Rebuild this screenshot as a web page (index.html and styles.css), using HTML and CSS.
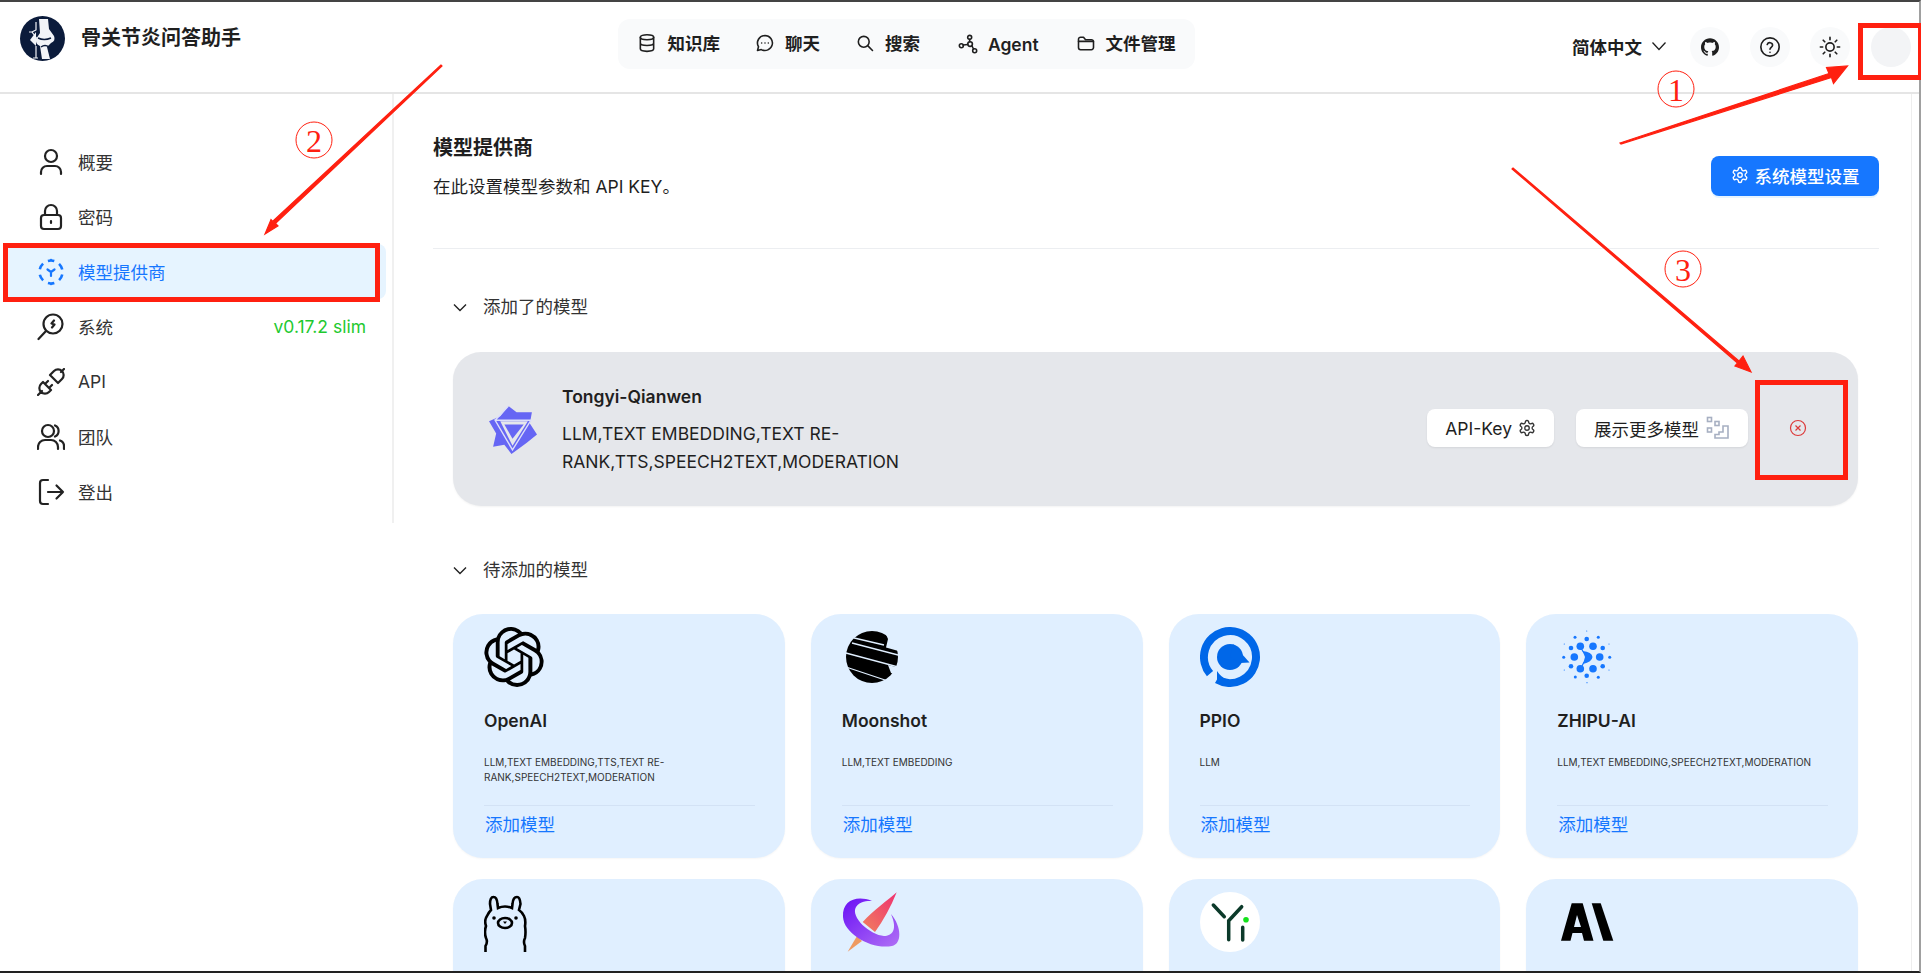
FILE: index.html
```html
<!DOCTYPE html>
<html lang="zh-CN">
<head>
<meta charset="utf-8">
<title>骨关节炎问答助手</title>
<link rel="stylesheet" href="styles.css">
</head>
<body>
<div class="window">
  <header class="topbar">
    <div class="brand">
      <svg class="brand-logo" viewBox="0 0 45 45">
        <circle cx="22.5" cy="22.5" r="22.5" fill="#0b1b3b"/>
        <path d="M19 3 L28 3 L29 13 L34 20 Q36 25 31 27 L27 31 L30 43 L22 43 L20 30 Q15 28 16 23 L20 17Z" fill="#f2f4f8"/>
        <path d="M18 22 Q24 25 31 22 M21 31 Q25 28 29 31" stroke="#0b1b3b" stroke-width="1.5" fill="none"/>
        <path d="M16 6 V14 L12 16 L18 24 M9 16 L12 16 M16 30 V42 M13 42 H18" stroke="#f2f4f8" stroke-width="1.2" fill="none"/>
        <path d="M16 16 L16 30 L10 24Z" fill="#f2f4f8"/>
      </svg>
      <span class="brand-name">骨关节炎问答助手</span>
    </div>
    <nav class="mainnav">
      <a class="navlink"><svg class="navicon" viewBox="0 0 24 24"><ellipse cx="12" cy="5" rx="8" ry="3"/><path d="M4 5v14c0 1.700 3.600 3 8 3s8-1.300 8-3V5M4 12c0 1.700 3.600 3 8 3s8-1.300 8-3"/></svg>知识库</a>
      <a class="navlink"><svg class="navicon" viewBox="0 0 24 24"><path d="M12 3a9 9 0 0 0-7.800 13.500L3 21l4.600-1.100A9 9 0 1 0 12 3z"/><path d="M8 12h.01M12 12h.01M16 12h.01"/></svg>聊天</a>
      <a class="navlink"><svg class="navicon" viewBox="0 0 24 24"><circle cx="10.500" cy="10.500" r="6.500"/><path d="M15.500 15.500 21 21"/></svg>搜索</a>
      <a class="navlink navlink-agent"><svg class="navicon" viewBox="0 0 24 24"><circle cx="14" cy="4" r="2.400"/><circle cx="4" cy="14" r="2.400"/><circle cx="14.500" cy="12" r="2.800"/><circle cx="20" cy="20" r="2.400"/><path d="M14 6.400v2.800M6.200 13.300l5.600-.8M16.600 14l2 4"/></svg>Agent</a>
      <a class="navlink"><svg class="navicon" viewBox="0 0 24 24"><path d="M3 7.500A2.500 2.500 0 0 1 5.500 5H9l2.500 3H18.500A2.500 2.500 0 0 1 21 10.500v7A2.500 2.500 0 0 1 18.500 20h-13A2.500 2.500 0 0 1 3 17.500z"/><path d="M3 10h18"/></svg>文件管理</a>
    </nav>
    <div class="tools">
      <span class="lang">简体中文<svg class="lang-caret" viewBox="0 0 16 10"><path d="M1.500 1.500 8 8.500l6.500-7"/></svg></span>
      <span class="round"><svg class="round-gh" viewBox="0 0 24 24"><path d="M12 .297c-6.630 0-12 5.373-12 12 0 5.303 3.438 9.800 8.205 11.385.6.113.82-.258.82-.577 0-.285-.01-1.040-.015-2.040-3.338.724-4.042-1.610-4.042-1.610C4.422 18.070 3.633 17.700 3.633 17.700c-1.087-.744.084-.729.084-.729 1.205.084 1.838 1.236 1.838 1.236 1.070 1.835 2.809 1.305 3.495.998.108-.776.417-1.305.76-1.605-2.665-.3-5.466-1.332-5.466-5.930 0-1.310.465-2.380 1.235-3.220-.135-.303-.54-1.523.105-3.176 0 0 1.005-.322 3.300 1.230.96-.267 1.980-.399 3-.405 1.020.006 2.040.138 3 .405 2.280-1.552 3.285-1.230 3.285-1.230.645 1.653.24 2.873.12 3.176.765.84 1.230 1.910 1.230 3.220 0 4.610-2.805 5.625-5.475 5.920.42.36.81 1.096.81 2.220 0 1.606-.015 2.896-.015 3.286 0 .315.21.69.825.57C20.565 22.092 24 17.592 24 12.297c0-6.627-5.373-12-12-12"/></svg></span>
      <span class="round"><svg class="round-line" viewBox="0 0 24 24"><circle cx="12" cy="12" r="10"/><path d="M9 9.200a3 3 0 0 1 5.800 1c0 2-2.800 2.500-2.800 4.200M12 17.800h.01"/></svg></span>
      <span class="round"><svg class="round-line" viewBox="0 0 24 24"><circle cx="12" cy="12" r="4.500"/><path d="M12 1.500v2.500M12 20v2.500M1.500 12H4M20 12h2.500M4.600 4.600l1.700 1.700M17.700 17.700l1.700 1.700M4.600 19.400l1.700-1.700M17.700 6.300l1.700-1.700"/></svg></span>
      <span class="avatar"></span>
    </div>
  </header>

  <div class="panel">
    <aside class="sidebar">
      <a class="side-item"><svg class="side-icon" viewBox="0 0 28 28"><circle cx="14" cy="8" r="6"/><path d="M4 26v-2a6 6 0 0 1 6-6h8a6 6 0 0 1 6 6v2"/></svg>概要</a>
      <a class="side-item"><svg class="side-icon" viewBox="0 0 28 28"><rect x="4" y="12" width="20" height="14" rx="3"/><path d="M8 12V8a6 6 0 0 1 12 0v4M14 18v2"/></svg>密码</a>
      <a class="side-item is-active"><svg class="side-icon" viewBox="0 0 28 28"><circle class="side-dash" cx="14" cy="14" r="11.500"/><path d="M10.500 11.500l3.500 2.500 3.500-2.500M14 14v4"/><path class="side-tip" d="M14 .5l-2.500 2.500h5zM14 27.500l-2.500-2.500h5z"/></svg>模型提供商</a>
      <a class="side-item"><svg class="side-icon" viewBox="0 0 28 28"><circle cx="16" cy="11" r="9.500"/><path d="M9 18 1.500 26M17 7.500l-2.500 3 3 1-2.500 3"/></svg>系统<span class="version">v0.17.2 slim</span></a>
      <a class="side-item"><svg class="side-icon" viewBox="0 0 28 28"><path d="M6 14 14 22 12 24A5.600 5.600 0 0 1 4 16zM5 23 1 27M8 16l3-3M12 20l3-3M13 7l8 8 4-4A5.600 5.600 0 0 0 17 3zM24 4l3-3"/></svg>API</a>
      <a class="side-item"><svg class="side-icon" viewBox="0 0 28 28"><circle cx="11" cy="8" r="6"/><path d="M1 26v-2a7 7 0 0 1 7-7h6a7 7 0 0 1 7 7v2M18 2.500a6 6 0 0 1 0 11M23 17.500a6 6 0 0 1 4 6V26"/></svg>团队</a>
      <a class="side-item"><svg class="side-icon" viewBox="0 0 28 28"><path d="M11 2H6a3 3 0 0 0-3 3v18a3 3 0 0 0 3 3h5M11 14h15M19.500 7.500 26 14l-6.500 6.500"/></svg>登出</a>
    </aside>

    <main class="content">
      <div class="page-head">
        <div>
          <h1 class="page-title">模型提供商</h1>
          <p class="page-sub">在此设置模型参数和 API KEY。</p>
        </div>
        <button class="primary"><svg class="gear" viewBox="0 0 24 24"><path d="M12.220 2h-.44a2 2 0 0 0-2 2v.18a2 2 0 0 1-1 1.730l-.43.25a2 2 0 0 1-2 0l-.15-.08a2 2 0 0 0-2.730.73l-.22.38a2 2 0 0 0 .73 2.730l.15.1a2 2 0 0 1 1 1.720v.51a2 2 0 0 1-1 1.740l-.15.09a2 2 0 0 0-.73 2.730l.22.38a2 2 0 0 0 2.730.73l.15-.08a2 2 0 0 1 2 0l.43.25a2 2 0 0 1 1 1.730V20a2 2 0 0 0 2 2h.44a2 2 0 0 0 2-2v-.18a2 2 0 0 1 1-1.730l.43-.25a2 2 0 0 1 2 0l.15.08a2 2 0 0 0 2.730-.73l.22-.39a2 2 0 0 0-.73-2.730l-.15-.08a2 2 0 0 1-1-1.740v-.5a2 2 0 0 1 1-1.740l.15-.09a2 2 0 0 0 .73-2.730l-.22-.38a2 2 0 0 0-2.730-.73l-.15.08a2 2 0 0 1-2 0l-.43-.25a2 2 0 0 1-1-1.730V4a2 2 0 0 0-2-2z"/><circle cx="12" cy="12" r="3"/></svg>系统模型设置</button>
      </div>

      <section class="added">
        <h2 class="sec-title"><svg class="sec-caret" viewBox="0 0 14 9"><path d="M1 1.500 7 7.500l6-6"/></svg>添加了的模型</h2>
        <div class="added-card">
          <svg class="qwen" viewBox="0 0 48 48">
            <path d="M20 1 28 7H43L41 18 48 29 38 37 23 48 16 39 5 41 8 28 1 16 12 11z" fill="#6666f4"/>
            <path d="M12 16H39L24 40z" fill="#e5e7eb"/>
            <path d="M7 15H42L24 44zM20 1 7 15" stroke="#dcdffa" stroke-width="1.400" fill="none"/>
            <path d="M16 19H35L24 33z" fill="#6666f4"/>
          </svg>
          <div class="added-text">
            <div class="added-name">Tongyi-Qianwen</div>
            <div class="added-tags">LLM,TEXT EMBEDDING,TEXT RE-RANK,TTS,SPEECH2TEXT,MODERATION</div>
          </div>
          <div class="added-actions">
            <button class="ghost">API-Key<svg class="gear-dark" viewBox="0 0 24 24"><path d="M12.220 2h-.44a2 2 0 0 0-2 2v.18a2 2 0 0 1-1 1.730l-.43.25a2 2 0 0 1-2 0l-.15-.08a2 2 0 0 0-2.730.73l-.22.38a2 2 0 0 0 .73 2.730l.15.1a2 2 0 0 1 1 1.720v.51a2 2 0 0 1-1 1.740l-.15.09a2 2 0 0 0-.73 2.730l.22.38a2 2 0 0 0 2.730.73l.15-.08a2 2 0 0 1 2 0l.43.25a2 2 0 0 1 1 1.730V20a2 2 0 0 0 2 2h.44a2 2 0 0 0 2-2v-.18a2 2 0 0 1 1-1.730l.43-.25a2 2 0 0 1 2 0l.15.08a2 2 0 0 0 2.730-.73l.22-.39a2 2 0 0 0-.73-2.730l-.15-.08a2 2 0 0 1-1-1.740v-.5a2 2 0 0 1 1-1.740l.15-.09a2 2 0 0 0 .73-2.730l-.22-.38a2 2 0 0 0-2.730-.73l-.15.08a2 2 0 0 1-2 0l-.43-.25a2 2 0 0 1-1-1.730V4a2 2 0 0 0-2-2z"/><circle cx="12" cy="12" r="3"/></svg></button>
            <button class="ghost">展示更多模型<svg class="steps" viewBox="0 0 24 24"><rect x="1.500" y="1.500" width="4" height="4"/><rect x="9" y="5.500" width="4" height="4"/><rect x="1.500" y="12" width="4" height="4"/><path d="M9 22h13V10h-5v6h-4v2.500H9z"/></svg></button>
            <svg class="remove" viewBox="0 0 18 18"><circle cx="9" cy="9" r="7.500"/><path d="M6.500 6.500l5 5M11.500 6.500l-5 5"/></svg>
          </div>
        </div>
      </section>

      <section class="pending">
        <h2 class="sec-title"><svg class="sec-caret" viewBox="0 0 14 9"><path d="M1 1.500 7 7.500l6-6"/></svg>待添加的模型</h2>
        <div class="grid">
          <article class="card">
            <svg class="logo" viewBox="0 0 24 24"><path d="M22.282 9.821a5.985 5.985 0 0 0-.516-4.911 6.046 6.046 0 0 0-6.510-2.900A6.065 6.065 0 0 0 4.981 4.182a5.985 5.985 0 0 0-3.998 2.900 6.046 6.046 0 0 0 .743 7.097 5.980 5.980 0 0 0 .511 4.911 6.051 6.051 0 0 0 6.515 2.900A5.985 5.985 0 0 0 13.260 24a6.056 6.056 0 0 0 5.772-4.206 5.989 5.989 0 0 0 3.998-2.900 6.056 6.056 0 0 0-.748-7.073zm-9.022 12.608a4.476 4.476 0 0 1-2.876-1.041l.142-.08 4.778-2.758a.795.795 0 0 0 .393-.681v-6.737l2.020 1.169a.071.071 0 0 1 .038.052v5.583a4.504 4.504 0 0 1-4.495 4.494zm-9.661-4.125a4.471 4.471 0 0 1-.535-3.014l.142.085 4.783 2.758a.771.771 0 0 0 .781 0l5.843-3.369v2.333a.08.08 0 0 1-.033.061L9.740 19.950a4.499 4.499 0 0 1-6.141-1.646zM2.341 7.896a4.485 4.485 0 0 1 2.366-1.973V11.600a.766.766 0 0 0 .388.677l5.814 3.354-2.020 1.169a.076.076 0 0 1-.071 0l-4.830-2.787A4.504 4.504 0 0 1 2.341 7.872zm16.596 3.856L13.104 8.364 15.119 7.200a.076.076 0 0 1 .071 0l4.830 2.791a4.494 4.494 0 0 1-.676 8.105v-5.678a.79.79 0 0 0-.407-.667zm2.011-3.023l-.142-.085-4.774-2.782a.776.776 0 0 0-.785 0L9.409 9.230V6.897a.066.066 0 0 1 .028-.061l4.830-2.787a4.499 4.499 0 0 1 6.680 4.660zM8.307 12.863l-2.020-1.164a.08.08 0 0 1-.038-.057V6.074a4.499 4.499 0 0 1 7.376-3.454l-.142.081L8.704 5.459a.795.795 0 0 0-.393.681zm1.097-2.365l2.602-1.500 2.607 1.500v2.999l-2.597 1.500-2.607-1.500z"/></svg>
            <h3 class="card-name">OpenAI</h3>
            <p class="card-tags">LLM,TEXT EMBEDDING,TTS,TEXT RE-RANK,SPEECH2TEXT,MODERATION</p>
            <a class="card-add">添加模型</a>
          </article>
          <article class="card">
            <svg class="logo" viewBox="0 0 60 60">
              <circle cx="30" cy="30" r="26"/>
              <path d="M42 3H60V25L44 20.500 46 12zM46 38 60 41.500V49L49 46z" fill="#e0efff"/>
              <path d="M8 10 42 18M10 16 60 29M2 25.500 60 41M4 40 46 54" stroke="#e0efff" stroke-width="1.300"/>
            </svg>
            <h3 class="card-name">Moonshot</h3>
            <p class="card-tags">LLM,TEXT EMBEDDING</p>
            <a class="card-add">添加模型</a>
          </article>
          <article class="card">
            <svg class="logo" viewBox="0 0 60 60">
              <path d="M10 46.620A26 26 0 1 1 17 52.520" fill="none" stroke="#0067e8" stroke-width="8"/>
              <path d="M17 44V56L26 58V52Q21 50 17 44z"/>
              <circle cx="30" cy="30" r="13"/>
              <path d="M33 17 49.500 35.500 40 36 30 30z"/>
            </svg>
            <h3 class="card-name">PPIO</h3>
            <p class="card-tags">LLM</p>
            <a class="card-add">添加模型</a>
          </article>
          <article class="card">
            <svg class="logo logo-zhipu" viewBox="0 0 60 60">
              <path d="M25.500 24Q35 25 35.500 30 35 35 26 37L28 30z"/>
              <path class="zhipu-link" d="M23.300 20 27 26M27 35 24 41"/>
              <circle cx="23.300" cy="19.300" r="3.800"/><circle cx="36" cy="19.300" r="3.800"/><circle cx="17.300" cy="30" r="3.800"/><circle cx="42.700" cy="30" r="3.800"/><circle cx="23.300" cy="41.700" r="3.800"/><circle cx="36" cy="41.700" r="3.800"/>
              <circle cx="14" cy="21" r="2.300"/><circle cx="45.700" cy="21" r="2.300"/><circle cx="14" cy="39.300" r="2.300"/><circle cx="45.700" cy="39.300" r="2.300"/><circle cx="29.700" cy="12" r="2.300"/><circle cx="29.700" cy="48.700" r="2.300"/>
              <circle cx="6.700" cy="30.300" r="1.500"/><circle cx="52.700" cy="30.300" r="1.500"/><circle cx="18" cy="10.300" r="1.500"/><circle cx="41.300" cy="10.300" r="1.500"/><circle cx="18.300" cy="50" r="1.500"/><circle cx="41.300" cy="50.300" r="1.500"/>
              <circle cx="7.300" cy="17" r=".6"/><circle cx="52" cy="17" r=".6"/><circle cx="7.300" cy="43" r=".6"/><circle cx="52" cy="43" r=".6"/><circle cx="29.700" cy="4" r=".6"/><circle cx="30" cy="55.700" r=".6"/>
            </svg>
            <h3 class="card-name">ZHIPU-AI</h3>
            <p class="card-tags">LLM,TEXT EMBEDDING,SPEECH2TEXT,MODERATION</p>
            <a class="card-add">添加模型</a>
          </article>
          <article class="card">
            <svg class="logo logo-ollama" viewBox="0 0 60 60">
              <path d="M1.500 60V54Q4 50 2 46 0 40 2 34 0 28 3 24 5 20 7 18L6 12Q6 5 9.500 5 13 5 13.500 12L14 16Q21 13 28 16L28.500 12Q29 5 33 5 36 5 36.500 12L35 18Q38 20 40 24 42 28 41 34 42 40 41 46 39 50 41 54V60"/>
              <ellipse cx="21" cy="31" rx="7" ry="5"/>
              <path class="fill" d="M19 29.500h4l-2 2.500z"/>
              <circle class="fill" cx="10" cy="26" r="1.800"/><circle class="fill" cx="32" cy="26" r="1.800"/>
            </svg>
          </article>
          <article class="card">
            <svg class="logo" viewBox="0 0 60 60">
              <defs>
                <linearGradient id="swoosh" x1="0" y1="0" x2="1" y2="1"><stop offset="0" stop-color="#6a10f5"/><stop offset="1" stop-color="#b070f5"/></linearGradient>
                <linearGradient id="rocket" x1="1" y1="0" x2="0" y2="1"><stop offset="0" stop-color="#ef3070"/><stop offset="1" stop-color="#f08060"/></linearGradient>
              </defs>
              <path d="M54.700.3C46 8 32 18 20.700 30L33 40Q46 22 54.700.3z" fill="url(#rocket)"/>
              <path d="M15 44 5.700 59.700 20 49z" fill="#ee9a62"/>
              <path d="M30 9C15 3 0 8 1 25 2 42 30 58 50 54 60 52 60 35 49 22 56 38 50 44 42 44 28 43 8 25 14 15 18 9 25 9 30 9z" fill="url(#swoosh)"/>
            </svg>
          </article>
          <article class="card">
            <svg class="logo" viewBox="0 0 60 60">
              <circle cx="30" cy="30" r="30" fill="#fff"/>
              <path d="M13.300 13 24.300 24.700M41.700 14.700 28.700 28.700V47.700M42.700 35.300V48" stroke="#0c3a2a" stroke-width="3.500" stroke-linecap="round" fill="none"/>
              <circle cx="46" cy="27.700" r="2.800" fill="#13e21b"/>
            </svg>
          </article>
          <article class="card">
            <svg class="logo" viewBox="0 0 60 60">
              <path fill-rule="evenodd" d="M4 48.700 14.700 11.300H25.700L36.500 48.700H27L25 41H15.500L13.500 48.700zM20 23 17 35H24z"/>
              <path d="M34.700 11.300H43.700L56.300 48.700H46.300z"/>
            </svg>
          </article>
        </div>
      </section>
    </main>
  </div>
</div>

<svg class="marks" viewBox="0 0 1921 973" width="1921" height="973">
  <rect x="1860.500" y="25.500" width="60" height="52" class="mark-box"/>
  <rect x="5.500" y="245.500" width="372" height="54" class="mark-box"/>
  <rect x="1757.500" y="382.500" width="88" height="95" class="mark-box"/>
  <path d="M1620 143 1829 73.500l-2.500-6 21-1.500-14 17.500-2-6L1621 144z" class="mark-arrow"/>
  <path d="M441 65 273 221l5 5-13 8 6-14.500 4 4.500L442 66z" class="mark-arrow"/>
  <path d="M1513 168 1739 361l4-5 8 16-16-6 2.500-3L1512 169z" class="mark-arrow"/>
</svg>
<span class="num num-1">1</span>
<span class="num num-2">2</span>
<span class="num num-3">3</span>
</body>
</html>
```
FILE: styles.css
```css
* { box-sizing: border-box; }
html, body { margin: 0; height: 100%; overflow: hidden; background: #fff; }
body {
  font-family: "Inter", "Noto Sans CJK SC", sans-serif;
  font-size: 17.5px;
  color: #1f1f1f;
}
a { color: inherit; text-decoration: none; }
h1, h2, h3, p { margin: 0; }

.window {
  width: 1921px;
  height: 973px;
  display: flex;
  flex-direction: column;
  overflow: hidden;
  border-top: 2px solid #444;
  border-bottom: 2px solid #222;
  border-right: 2px solid #a0a0a0;
}

.topbar {
  flex: none;
  height: 92px;
  display: flex;
  align-items: flex-start;
  justify-content: space-between;
  padding: 0 8px 0 20px;
  border-bottom: 2px solid #e5e5e5;
}
.brand { display: flex; align-items: center; gap: 16px; margin-top: 14px; }
.brand-logo { width: 45px; height: 45px; }
.brand-name { font-size: 20px; font-weight: 700; line-height: 45px; }

.mainnav {
  display: flex;
  gap: 3px;
  padding: 0 3px;
  margin-top: 17px;
  height: 50px;
  background: #f9fafb;
  border-radius: 12px;
}
.navlink {
  display: flex;
  align-items: center;
  gap: 10px;
  padding: 0 16px 3px;
  font-weight: 600;
}
.navlink-agent { margin: 0 2px 0 3px; padding-bottom: 0; }
.navicon { width: 20px; height: 20px; fill: none; stroke: #1f1f1f; stroke-width: 1.900; stroke-linecap: round; stroke-linejoin: round; }

.tools { display: flex; align-items: center; gap: 20px; margin-top: 25px; }
.lang { display: flex; align-items: center; gap: 9px; padding-bottom: 2px; font-weight: 600; margin-right: 3px; }
.lang-caret { width: 16px; height: 10px; fill: none; stroke: #1f1f1f; stroke-width: 1.300; }
.round { width: 40px; height: 40px; border-radius: 50%; background: #f9fafb; display: flex; align-items: center; justify-content: center; }
.round-gh { width: 18px; height: 18px; fill: #1f1f1f; }
.round-line { width: 22px; height: 22px; fill: none; stroke: #1f1f1f; stroke-width: 1.800; stroke-linecap: round; }
.avatar { width: 40px; height: 40px; margin-left: 1px; border-radius: 50%; background: #f3f4f6; }

.panel {
  flex: 1;
  min-height: 0;
  display: flex;
  align-items: flex-start;
  margin-right: 7px;
  border-right: 1px solid #eeeeee;
}

.sidebar {
  flex: none;
  width: 394px;
  padding: 40px 6px 4px 3px;
  border-right: 2px solid #f0f0f0;
}
.side-item {
  display: flex;
  align-items: center;
  gap: 13px;
  height: 55px;
  padding: 0 20px 0 34px;
  color: #333;
  border-radius: 8px;
}
.side-icon { flex: none; width: 28px; height: 28px; fill: none; stroke: #222; stroke-width: 2.200; stroke-linecap: round; stroke-linejoin: round; }
.is-active { background: #e6f4ff; color: #1677ff; }
.is-active .side-icon { stroke: #1677ff; }
.side-dash { stroke-width: 2.600; stroke-linecap: butt; stroke-dasharray: 6.500 5.550; stroke-dashoffset: -2.500; }
.side-tip { fill: #1677ff; stroke: none; }
.version { margin-left: auto; font-size: 17.500px; color: #1ec92f; }

.content { flex: 1; min-width: 0; padding: 0 32px 0 39px; }
.page-head {
  display: flex;
  justify-content: space-between;
  align-items: flex-start;
  padding: 40px 0 47px;
  border-bottom: 1px solid #eceef1;
}
.page-title { font-size: 20px; font-weight: 600; line-height: 28px; }
.page-sub { margin-top: 11px; line-height: 28px; }
.primary {
  display: flex;
  align-items: center;
  justify-content: center;
  gap: 6px;
  width: 168px;
  height: 40px;
  margin-top: 22px;
  padding: 0 0 2px;
  border: 0;
  border-radius: 8px;
  background: #1677ff;
  color: #fff;
  font: inherit;
  font-weight: 500;
  box-shadow: 0 2px 0 rgba(5, 145, 255, .1);
}
.gear { width: 18px; height: 18px; fill: none; stroke: #fff; stroke-width: 1.800; }

.added { padding: 46px 21px 0 20px; }
.pending { padding: 52px 21px 0 20px; }
.sec-title {
  display: flex;
  align-items: center;
  gap: 16px;
  font-size: 17.500px;
  font-weight: 400;
  line-height: 24px;
  color: #333;
}
.sec-caret { width: 14px; height: 9px; fill: none; stroke: #222; stroke-width: 1.400; }

.added-card {
  display: flex;
  align-items: center;
  height: 154px;
  margin-top: 33px;
  padding: 0 51px 0 35px;
  border-radius: 28px;
  background: #e5e7eb;
  box-shadow: 0 1px 2px rgba(0, 0, 0, .05);
}
.qwen { flex: none; width: 49px; height: 49px; }
.added-text { width: 310px; margin-left: 25px; padding-top: 2px; }
.added-name { font-weight: 600; line-height: 24px; }
.added-tags { margin-top: 11px; line-height: 28px; }
.added-actions { margin-left: auto; padding-bottom: 2px; display: flex; align-items: center; gap: 22px; }
.ghost {
  display: flex;
  align-items: center;
  gap: 6px;
  height: 38px;
  padding: 0 18px;
  border: 0;
  border-radius: 8px;
  background: #fff;
  color: #1f1f1f;
  font: inherit;
  box-shadow: 0 1px 2px rgba(0, 0, 0, .08);
}
.gear-dark { width: 18px; height: 18px; fill: none; stroke: #333; stroke-width: 1.800; }
.steps { width: 24px; height: 24px; fill: none; stroke: #a7b0c2; stroke-width: 1.600; margin-left: 1px; }
.remove { width: 18px; height: 18px; margin-left: 19px; fill: none; stroke: #dc3a3a; stroke-width: 1.200; }

.grid { display: grid; grid-template-columns: repeat(4, 1fr); grid-auto-rows: 244px; gap: 21px 26px; margin-top: 32px; }
.card {
  padding: 13px 30px 0 31px;
  border-radius: 30px;
  background: #e0efff;
  box-shadow: 0 1px 2px rgba(0, 0, 0, .04);
}
.logo { display: block; width: 60px; height: 60px; fill: #000; }
.logo-zhipu { fill: #1677ff; }
.zhipu-link { fill: none; stroke: #1677ff; stroke-width: 1.200; }
.logo-ollama { fill: none; stroke: #000; stroke-width: 2.600; }
.logo-ollama .fill { fill: #000; stroke: none; }
.card:nth-child(3) .logo { fill: #0067e8; }
.card-name { margin-top: 22px; font-size: 17.500px; font-weight: 600; line-height: 24px; }
.card-tags {
  margin-top: 22px;
  min-height: 30px;
  font-size: 10px;
  line-height: 15px;
  color: #333;
}
.card-add {
  display: block;
  margin-top: 20px;
  padding: 7px 0 0 1px;
  border-top: 1px solid #d3e2f5;
  line-height: 24px;
  color: #1677ff;
}

.marks { position: absolute; top: 0; left: 0; pointer-events: none; }
.mark-box { fill: none; stroke: #ff2010; stroke-width: 5; }
.mark-arrow { fill: #ff2010; stroke: #ff2010; stroke-width: 1.200; }
.num {
  position: absolute;
  width: 37px;
  height: 37px;
  display: flex;
  align-items: center;
  justify-content: center;
  border: 1px solid #ff2010;
  border-radius: 50%;
  font-family: "Liberation Serif", serif;
  font-size: 32px;
  line-height: 1;
  color: #ff2010;
  transform: translate(-50%, -50%);
}
.num-1 { left: 1676px; top: 89px; }
.num-2 { left: 314px; top: 140px; }
.num-3 { left: 1683px; top: 269px; }
```
